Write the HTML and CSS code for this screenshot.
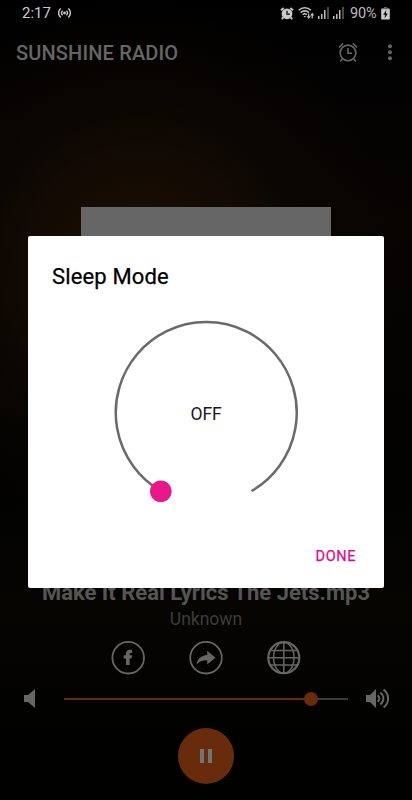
FILE: index.html
```html
<!DOCTYPE html>
<html lang="en">

<head>
    <meta charset="UTF-8">
    <meta name="viewport" content="width=device-width, initial-scale=1.0">
    <title>Sunshine Radio</title>
    <link rel="stylesheet" href="styles.css">
</head>

<body>

    <div class="screen">
        <div class="status-bar">
            <span class="time">2:17</span>
            <svg class="hotspot" width="13" height="12" viewBox="0 0 14 12" fill="none" stroke="#c8c8c8" stroke-width="1.6">
                <circle cx="7" cy="6" r="1.5" fill="#c8c8c8" stroke="none"/>
                <path d="M4.9 3.5a3.4 3.4 0 0 0 0 5M9.1 3.5a3.4 3.4 0 0 1 0 5M2.9 1.2a6.3 6.3 0 0 0 0 9.6M11.1 1.2a6.3 6.3 0 0 1 0 9.6"/>
            </svg>
            <div class="status-icons">
                <svg width="14" height="13" viewBox="0 0 14 13">
                    <circle cx="7" cy="6.8" r="5.4" fill="#cacaca"/>
                    <path d="M1 3.2L3.7 1M13 3.2L10.3 1M3.2 10.5L1.8 12M10.8 10.5l1.4 1.5" stroke="#cacaca" stroke-width="2"/>
                    <path d="M7 3.8v3.4h2.8" fill="none" stroke="#000" stroke-width="1.2"/>
                </svg>
                <svg class="wifi" width="17" height="14" viewBox="0 0 17 14" fill="none" stroke="#c0c0c0" stroke-width="1.6">
                    <path d="M.7 4.3a8.5 8.5 0 0 1 12.2 0M2.7 6.6a5.8 5.8 0 0 1 8.2 0M4.7 8.8a3 3 0 0 1 4.2 0"/>
                    <path d="M5.4 10l1.4 1.5L8.2 10z" fill="#c0c0c0" stroke="none"/>
                    <path d="M10.7 7.5v4M14.2 12.5v-4" stroke-width="1.2"/>
                    <path d="M8.6 10.3h4.2l-2.1 2.6zM12.1 9.4h4.2l-2.1-2.6z" fill="#c0c0c0" stroke="none"/>
                </svg>
                <svg class="signal" width="11" height="12" viewBox="0 0 11 12">
                    <path d="M0 9h1.5v3H0zM3 7h1.5v5H3zM6 3h1.5v9H6z" fill="#bbb"/>
                    <path d="M9 0h2v12H9z" fill="#484848"/>
                </svg>
                <svg class="signal" width="11" height="12" viewBox="0 0 11 12">
                    <path d="M0 9h1.5v3H0zM3 7h1.5v5H3zM6 3h1.5v9H6z" fill="#bbb"/>
                    <path d="M9 0h2v12H9z" fill="#484848"/>
                </svg>
                <span class="battery-text">90%</span>
                <svg width="9" height="13" viewBox="0 0 9 13">
                    <path d="M3 0h3v1h2.5v2h-8V1H3z" fill="#666"/>
                    <path d="M.2 2.2h8.6V12a.6.6 0 0 1-.6.6H.8a.6.6 0 0 1-.6-.6z" fill="#ccc"/>
                    <path d="M5.3 3L2.2 7.8h1.9L3.6 11.4l3.2-4.9H4.9z" fill="#000"/>
                </svg>
            </div>
        </div>

        <header class="app-bar">
            <h1>SUNSHINE RADIO</h1>
            <svg class="alarm" width="20" height="20" viewBox="0 0 20 20" fill="none" stroke="#666" stroke-width="1.6">
                <circle cx="10" cy="9.9" r="7.8"/>
                <path d="M10 4.9v5.4h4M1 4.4L5.2.5M19 4.4L14.8.5M4.3 16L2.2 18.5M15.7 16l2.1 2.5"/>
            </svg>
            <svg class="more" width="4" height="18" viewBox="0 0 4 18" fill="#666">
                <circle cx="2" cy="2.3" r="2"/>
                <circle cx="2" cy="8.3" r="2"/>
                <circle cx="2" cy="14.3" r="2"/>
            </svg>
        </header>

        <main class="player">
            <div class="cover"></div>
            <h2 class="song">Make It Real Lyrics The Jets.mp3</h2>
            <p class="artist">Unknown</p>

            <div class="links">
                <svg width="34" height="34" viewBox="0 0 34 34">
                    <circle cx="17.2" cy="16.7" r="15.8" fill="none" stroke="#666" stroke-width="1.8"/>
                    <path d="M15 24v-6.5h-2.3v-3.2H15v-1.7c0-2.6 1.5-3.9 3.8-3.9h2.3v3.2h-1.5c-.8 0-1 .4-1 1v1.4h2.4l-.4 3.2h-2V24z" fill="#666"/>
                </svg>
                <svg width="34" height="34" viewBox="0 0 34 34">
                    <circle cx="17" cy="16.7" r="15.8" fill="none" stroke="#666" stroke-width="1.8"/>
                    <path d="M7.5 23.5c.8-5.5 4.5-8.9 10.7-9.4V9.8l8.3 7-8.3 6.6v-4.2c-4.6-.1-7.9 1-10.7 4.3z" fill="#666"/>
                </svg>
                <svg width="34" height="34" viewBox="0 0 34 34" fill="none" stroke="#666" stroke-width="1.5">
                    <circle cx="16.8" cy="16.7" r="15.5" stroke-width="2.2"/>
                    <ellipse cx="16.8" cy="16.7" rx="10.2" ry="15.4"/>
                    <path d="M16.8 1v32M1 16.7h32M4 9.4h26M4 24h26"/>
                </svg>
            </div>

            <div class="volume">
                <svg width="11" height="20" viewBox="0 0 11 20" fill="#666">
                    <path d="M0 6h4l7-6v19l-7-6H0z"/>
                </svg>
                <div class="track">
                    <div class="level"></div>
                    <div class="knob"></div>
                </div>
                <svg width="24" height="20" viewBox="0 0 24 20">
                    <path d="M0 6h4l6-6v19l-6-6H0z" fill="#666"/>
                    <path d="M11.6 6.4a3.7 3.7 0 0 1 0 6.2M14.2 3.5c4.2 3 4.2 9 0 12M17.6 .6c6 4.6 6 13.2 0 17.8" fill="none" stroke="#666" stroke-width="2"/>
                </svg>
            </div>

            <button class="pause" aria-label="Pause">
                <span></span>
                <span></span>
            </button>
        </main>

        <div class="dialog">
            <h3>Sleep Mode</h3>
            <div class="dial">
                <svg width="204" height="204" viewBox="0 0 204 204">
                    <path d="M57 180A90.5 90.5 0 1 1 147.5 180" fill="none" stroke="#6a6a6a" stroke-width="2.5"/>
                    <circle cx="56.8" cy="180.3" r="10.8" fill="#e9168c"/>
                </svg>
                <span>OFF</span>
            </div>
            <button class="done">DONE</button>
        </div>
    </div>

</body>

</html>
```
FILE: styles.css
```css
* {
    box-sizing: border-box;
}

body {
    margin: 0;
    background-color: #000;
    font-family: Roboto, "Liberation Sans", sans-serif;
}

h1, h2, h3, p {
    margin: 0;
}

button {
    border: none;
    padding: 0;
    font-family: inherit;
    cursor: pointer;
}

svg {
    display: block;
    flex-shrink: 0;
}

.screen {
    position: relative;
    display: flex;
    flex-direction: column;
    width: 412px;
    height: 800px;
    overflow: hidden;
    background: radial-gradient(ellipse 260px 270px at 140px 270px, #1c1004 0%, #130a03 40%, rgba(10, 6, 2, 0.6) 70%, transparent 100%),
        linear-gradient(to bottom, #000 0, #030202 80px, #070402 220px, #020201 480px, #060502 610px, #010100 740px);
}

/* status bar */
.status-bar {
    display: flex;
    align-items: center;
    height: 26px;
    padding: 0 22px 0 22px;
}

.time {
    width: 29px;
    font-size: 15px;
    line-height: 26px;
    color: #ccc;
}

.hotspot {
    margin-left: 7px;
}

.status-icons {
    display: flex;
    align-items: center;
    margin-left: auto;
}

.wifi {
    margin-left: 4px;
}

.signal {
    margin-left: 3px;
}

.signal + .signal {
    margin-left: 4px;
}

.battery-text {
    width: 29px;
    margin: 0 2px 0 6px;
    font-size: 14.5px;
    letter-spacing: -0.1px;
    color: #bbb;
}

/* app bar */
.app-bar {
    display: flex;
    align-items: center;
    height: 53px;
    padding: 0 20px 0 16px;
}

.app-bar h1 {
    font-size: 20px;
    font-weight: 500;
    line-height: 24px;
    letter-spacing: 0.15px;
    color: #666;
}

.alarm {
    margin-left: auto;
}

.more {
    margin-left: 30px;
}

/* player */
.player {
    display: flex;
    flex-direction: column;
    align-items: center;
    padding-top: 128px;
}

.cover {
    width: 250px;
    height: 250px;
    background-color: #666;
}

.song {
    margin-top: 122px;
    font-size: 22px;
    font-weight: 700;
    line-height: 28px;
    white-space: nowrap;
    color: #555;
}

.artist {
    font-size: 17.5px;
    line-height: 24px;
    color: #3c3c3c;
}

.links {
    display: flex;
    gap: 44px;
    margin-top: 10px;
}

.volume {
    display: flex;
    align-items: center;
    width: 100%;
    height: 20px;
    margin-top: 14px;
    padding: 0 22px 0 24px;
}

.track {
    position: relative;
    width: 284px;
    height: 2px;
    margin: 0 18px 0 29px;
    background-color: #3c3c3c;
}

.level {
    width: 247px;
    height: 2px;
    background-color: #692c0a;
}

.knob {
    position: absolute;
    top: -6px;
    left: 240px;
    width: 14px;
    height: 14px;
    border-radius: 50%;
    background-color: #692c0a;
}

.pause {
    display: flex;
    align-items: center;
    justify-content: center;
    gap: 4px;
    width: 56px;
    height: 56px;
    margin-top: 19px;
    border-radius: 50%;
    background-color: #692c0a;
}

.pause span {
    width: 4px;
    height: 14px;
    background-color: #747474;
}

/* sleep timer dialog */
.dialog {
    position: absolute;
    top: 236px;
    left: 28px;
    display: flex;
    flex-direction: column;
    width: 356px;
    height: 352px;
    padding: 26px 28px 0 24px;
    border-radius: 2px;
    background-color: #fff;
}

.dialog h3 {
    font-size: 22px;
    font-weight: 400;
    line-height: 30px;
    letter-spacing: 0.15px;
    color: #000;
    -webkit-text-stroke: 0.25px #000;
}

.dial {
    display: grid;
    place-items: center;
    align-self: center;
    width: 204px;
    height: 204px;
    margin: 19px 0 0 4px;
}

.dial svg,
.dial span {
    grid-area: 1 / 1;
}

.dial span {
    padding-top: 2px;
    font-size: 17.5px;
    letter-spacing: -0.2px;
    color: #1a1a1a;
}

.done {
    align-self: flex-end;
    margin-top: 32px;
    font-size: 14.5px;
    font-weight: 400;
    line-height: 20px;
    letter-spacing: 0.6px;
    color: #e0088c;
    -webkit-text-stroke: 0.25px #e0088c;
    background: none;
}
```
